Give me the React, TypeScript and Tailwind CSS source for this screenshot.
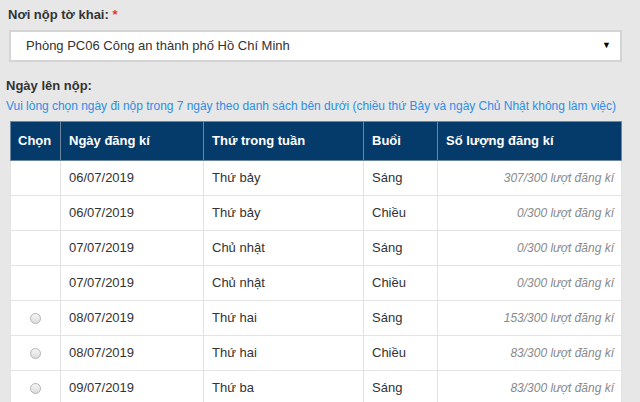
const ROWS = [
  { radio: false, date: '06/07/2019', day: 'Thứ bảy', session: 'Sáng', count: '307/300 lượt đăng kí' },
  { radio: false, date: '06/07/2019', day: 'Thứ bảy', session: 'Chiều', count: '0/300 lượt đăng kí' },
  { radio: false, date: '07/07/2019', day: 'Chủ nhật', session: 'Sáng', count: '0/300 lượt đăng kí' },
  { radio: false, date: '07/07/2019', day: 'Chủ nhật', session: 'Chiều', count: '0/300 lượt đăng kí' },
  { radio: true, date: '08/07/2019', day: 'Thứ hai', session: 'Sáng', count: '153/300 lượt đăng kí' },
  { radio: true, date: '08/07/2019', day: 'Thứ hai', session: 'Chiều', count: '83/300 lượt đăng kí' },
  { radio: true, date: '09/07/2019', day: 'Thứ ba', session: 'Sáng', count: '83/300 lượt đăng kí' },
];

export default function App() {
  return (
    <div className="h-[402px] w-[640px] overflow-hidden bg-[#e7e7e7] text-[13px] text-[#333] [font-family:'Liberation_Sans',Arial,sans-serif]">
      <div className="pl-[8px] pt-[5px] font-bold text-[#333]">
        Nơi nộp tờ khai: <span className="text-[#e53935]">*</span>
      </div>
      <div className="ml-[9px] mt-[5px] flex h-[32px] w-[613px] items-center justify-between border-2 border-[#d4d4d4] bg-white pl-[15px] pr-[9px]">
        <span>Phòng PC06 Công an thành phố Hồ Chí Minh</span>
        <span className="text-[9px] text-black">▼</span>
      </div>

      <div className="pl-[6px] pt-[14px] font-bold">Ngày lên nộp:</div>
      <div className="pl-[6px] pt-[2px] text-[12px] tracking-[-0.03px] text-[#2f8ee3]">
        Vui lòng chọn ngày đi nộp trong 7 ngày theo danh sách bên dưới (chiều thứ Bảy và ngày Chủ Nhật không làm việc)
      </div>

      <table className="ml-[10px] mt-[6px] w-[612px] table-fixed border-collapse">
        <colgroup>
          <col className="w-[50px]" />
          <col className="w-[143px]" />
          <col className="w-[160px]" />
          <col className="w-[74px]" />
          <col />
        </colgroup>
        <thead>
          <tr className="h-[39px] bg-[#053b6b] text-left font-bold text-white">
            <th className="border border-[#6f86a0] pl-[7px]">Chọn</th>
            <th className="border border-[#6f86a0] pl-[8px]">Ngày đăng kí</th>
            <th className="border border-[#6f86a0] pl-[8px]">Thứ trong tuần</th>
            <th className="border border-[#6f86a0] pl-[8px]">Buổi</th>
            <th className="border border-[#6f86a0] pl-[8px]">Số lượng đăng kí</th>
          </tr>
        </thead>
        <tbody>
          {ROWS.map((r, i) => (
            <tr key={i} className="h-[35px] bg-white">
              <td className="border border-[#e3e3e3] text-center">
                {r.radio && (
                  <span className="inline-block h-[11px] w-[11px] rounded-full border border-[#b5b5b5] bg-gradient-to-b from-[#f6f6f6] to-[#dcdcdc] align-middle" />
                )}
              </td>
              <td className="border border-[#e3e3e3] pl-[8px]">{r.date}</td>
              <td className="border border-[#e3e3e3] pl-[8px]">{r.day}</td>
              <td className="border border-[#e3e3e3] pl-[8px]">{r.session}</td>
              <td className="border border-[#e3e3e3] pr-[7px] text-right text-[12px] italic text-[#8a8a8a]">{r.count}</td>
            </tr>
          ))}
        </tbody>
      </table>
    </div>
  );
}
